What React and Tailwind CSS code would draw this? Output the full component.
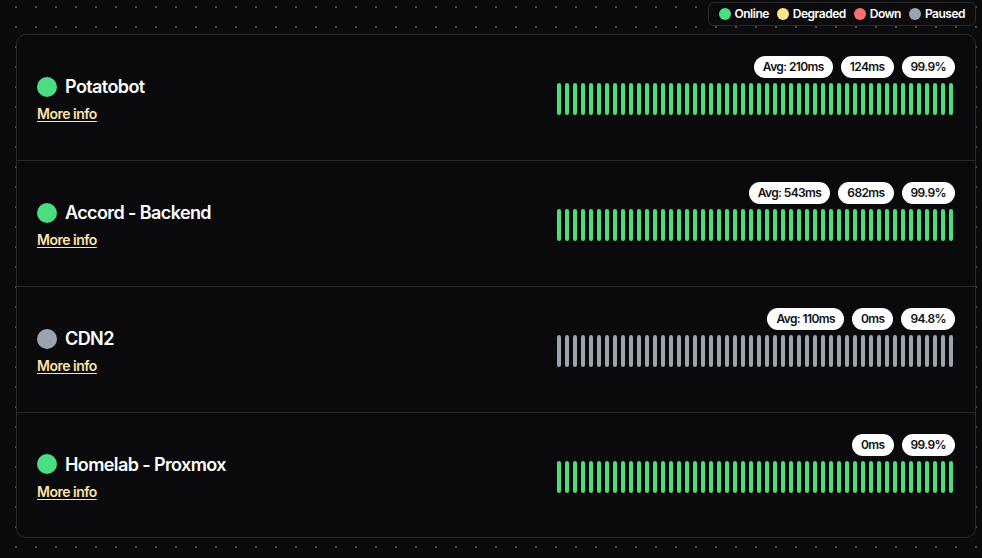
const monitors = [
  { name: "Potatobot", status: "online", avg: "210ms", ping: "124ms", uptime: "99.9%" },
  { name: "Accord - Backend", status: "online", avg: "543ms", ping: "682ms", uptime: "99.9%" },
  { name: "CDN2", status: "paused", avg: "110ms", ping: "0ms", uptime: "94.8%" },
  { name: "Homelab - Proxmox", status: "online", avg: null, ping: "0ms", uptime: "99.9%" },
];

const legend = [
  { label: "Online", dot: "bg-[#4ade80]" },
  { label: "Degraded", dot: "bg-[#fde68a]" },
  { label: "Down", dot: "bg-[#f87171]" },
  { label: "Paused", dot: "bg-[#9ca3af]" },
];

function Badge({ children }) {
  return (
    <span className="h-[22px] px-[9px] rounded-full bg-white text-[#111] text-[12px] font-semibold tracking-[-0.6px] flex items-center">
      {children}
    </span>
  );
}

function MonitorRow({ m, last }) {
  const color = m.status === "paused" ? "bg-[#9ca3af]" : "bg-[#4ade80]";
  return (
    <div
      className={`flex items-center justify-between pl-[20px] pr-[22px] ${
        last ? "h-[124px]" : "h-[126px] border-b border-[#27272a]"
      }`}
    >
      {/* Name + link */}
      <div className="flex flex-col gap-[3px] pt-[2px]">
        <div className="flex items-center gap-2">
          <span className={`w-5 h-5 rounded-full ${color}`} />
          <span className="text-[18px] font-semibold text-white tracking-[-0.6px]">{m.name}</span>
        </div>
        <a className="text-[14px] font-semibold text-[#fde3a7] underline underline-offset-2 tracking-[-0.5px] cursor-pointer">
          More info
        </a>
      </div>

      {/* Stats + bars */}
      <div className="flex flex-col items-end gap-[5px] pb-[24px]">
        <div className="flex gap-2 mr-[-2px]">
          {m.avg && <Badge>Avg: {m.avg}</Badge>}
          <Badge>{m.ping}</Badge>
          <Badge>{m.uptime}</Badge>
        </div>
        <div className="flex gap-1 h-8">
          {Array.from({ length: 50 }).map((_, i) => (
            <span key={i} className={`w-1 h-full rounded-full ${color}`} />
          ))}
        </div>
      </div>
    </div>
  );
}

export default function App() {
  return (
    <div
      className="w-[982px] h-[558px] overflow-hidden bg-[#0b0b0d] bg-[radial-gradient(circle,#4f4838_1px,transparent_1.2px)] bg-size-[20px_20px] bg-position-[6px_-3px] pt-[2px] pl-4 pr-[6px]"
      style={{ fontFamily: "Inter, 'Noto Sans', sans-serif" }}
    >
      {/* Legend */}
      <div className="flex justify-end">
        <div className="h-[24px] flex items-center gap-[8px] px-[10px] border border-[#2a2a2d] rounded-md bg-[#0b0b0d]">
          {legend.map((l) => (
            <div key={l.label} className="flex items-center gap-1">
              <span className={`w-3 h-3 rounded-full ${l.dot}`} />
              <span className="text-[12px] font-semibold text-white tracking-[-0.5px]">{l.label}</span>
            </div>
          ))}
        </div>
      </div>

      {/* Monitors */}
      <div className="mt-2 border border-[#2a2a2d] rounded-[10px] bg-[#0a0a0c]">
        {monitors.map((m, i) => (
          <MonitorRow key={m.name} m={m} last={i === monitors.length - 1} />
        ))}
      </div>
    </div>
  );
}
